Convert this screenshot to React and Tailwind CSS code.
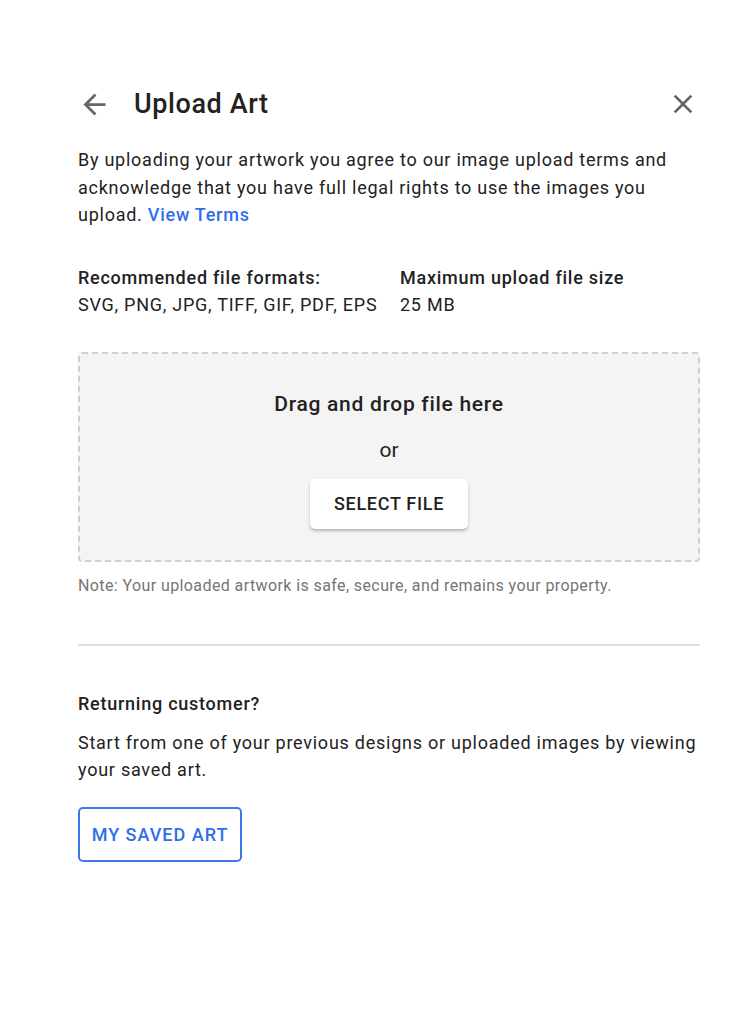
export default function App() {
  return (
    <div className="min-h-screen bg-white text-[#222]" style={{ fontFamily: "Roboto, 'Liberation Sans', sans-serif" }}>
      <div className="w-[622px] ml-[78px] pt-[84px]">
        <div className="flex items-center h-[40px]">
          <svg className="w-[33px] h-[33px] text-[#666]" viewBox="0 0 24 24" fill="currentColor">
            <path d="M20 11H7.83l5.59-5.59L12 4l-8 8 8 8 1.41-1.41L7.83 13H20v-2z" />
          </svg>
          <h1 className="ml-[23px] text-[27px] font-medium tracking-[0.6px] text-[#222]">Upload Art</h1>
          <svg className="ml-auto mr-[1px] w-[32px] h-[32px] text-[#666]" viewBox="0 0 24 24" fill="currentColor">
            <path d="M19 6.41 17.59 5 12 10.59 6.41 5 5 6.41 10.59 12 5 17.59 6.41 19 12 13.41 17.59 19 19 17.59 13.41 12z" />
          </svg>
        </div>
        <p className="mt-[22px] text-[18px] leading-[27.5px] tracking-[0.75px] text-[#222]">
          By uploading your artwork you agree to our image upload terms and acknowledge that you have full legal rights to use the images you upload. <span className="text-[#2f6fe8] font-medium">View Terms</span>
        </p>
        <div className="mt-[35px] flex text-[18px] leading-[27px] tracking-[0.75px]">
          <div className="w-[322px]">
            <div className="font-medium">Recommended file formats:</div>
            <div>SVG, PNG, JPG, TIFF, GIF, PDF, EPS</div>
          </div>
          <div>
            <div className="font-medium">Maximum upload file size</div>
            <div>25 MB</div>
          </div>
        </div>
        <div className="mt-[34px] h-[210px] bg-[#f4f4f4] border-2 border-dashed border-[#cfcfcf] rounded-[4px] flex flex-col items-center">
          <div className="mt-[36px] text-[21px] font-medium leading-[28px] tracking-[0.7px]">Drag and drop file here</div>
          <div className="mt-[18px] text-[21px] leading-[28px]">or</div>
          <button className="mt-[15px] w-[158px] h-[50px] bg-white rounded-[5px] text-[18px] font-medium tracking-[0.7px] text-[#222] shadow-[0_2px_3px_rgba(0,0,0,0.25)]">SELECT FILE</button>
        </div>
        <p className="mt-[13px] text-[16px] leading-[22px] tracking-[0.4px] text-[#757575]">Note: Your uploaded artwork is safe, secure, and remains your property.</p>
        <div className="mt-[47px] h-[2px] bg-[#dedede]" />
        <div className="mt-[44px] text-[18px] font-medium leading-[27px] tracking-[0.75px]">Returning customer?</div>
        <p className="mt-[12px] text-[18px] leading-[27.5px] tracking-[0.75px]">Start from one of your previous designs or uploaded images by viewing your saved art.</p>
        <button className="mt-[23px] w-[164px] h-[55px] border-2 border-[#3b78ee] rounded-[5px] text-[#2f6fe8] text-[18px] font-medium tracking-[1px]">MY SAVED ART</button>
      </div>
    </div>
  );
}
